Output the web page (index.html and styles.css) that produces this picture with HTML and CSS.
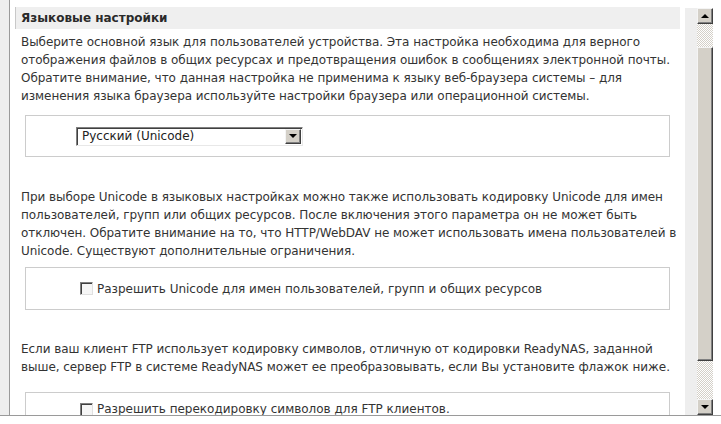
FILE: index.html
```html
<!DOCTYPE html>
<html lang="ru">
<head>
    <meta charset="UTF-8">
    <title>Языковые настройки</title>
    <link rel="stylesheet" href="styles.css">
</head>
<body>
    <div class="frame">
        <div class="side"></div>

        <div class="main">
            <div class="section-title">Языковые настройки</div>

            <p class="text first">Выберите основной язык для пользователей устройства. Эта настройка необходима для верного отображения файлов в общих ресурсах и предотвращения ошибок в сообщениях электронной почты. Обратите внимание, что данная настройка не применима к языку веб-браузера системы – для изменения языка браузера используйте настройки браузера или операционной системы.</p>

            <div class="option-box select-box">
                <div class="select">
                    <span class="select-value">Русский (Unicode)</span>
                    <span class="select-btn"><span class="arrow-down"></span></span>
                </div>
            </div>

            <p class="text second">При выборе Unicode в языковых настройках можно также использовать кодировку Unicode для имен пользователей, групп или общих ресурсов. После включения этого параметра он не может быть отключен. Обратите внимание на то, что HTTP/WebDAV не может использовать имена пользователей в Unicode. Существуют дополнительные ограничения.</p>

            <div class="option-box check-box">
                <label class="check"><span class="checkbox"></span>Разрешить Unicode для имен пользователей, групп и общих ресурсов</label>
            </div>

            <p class="text third">Если ваш клиент FTP использует кодировку символов, отличную от кодировки ReadyNAS, заданной выше, сервер FTP в системе ReadyNAS может ее преобразовывать, если Вы установите флажок ниже.</p>

            <div class="option-box check-box last">
                <label class="check"><span class="checkbox"></span>Разрешить перекодировку символов для FTP клиентов.</label>
            </div>
        </div>

        <div class="rail">
            <div class="rail-gap"></div>
            <div class="scrollbar">
                <div class="sb-btn"><span class="arrow-up"></span></div>
                <div class="sb-track top"></div>
                <div class="sb-thumb"></div>
                <div class="sb-track bottom"></div>
                <div class="sb-btn"><span class="arrow-down"></span></div>
            </div>
        </div>
    </div>
</body>
</html>
```

FILE: styles.css
```css
/* Basic styling */
body {
    margin: 0;
    padding: 0;
    background: #fff;
    font-family: "DejaVu Sans", Verdana, sans-serif;
    font-size: 12px;
    color: #333;
}

.frame {
    display: flex;
    height: 415px;
    border-bottom: 1px solid #9a9a9a;
    overflow: hidden;
}

.side {
    width: 9px;
    background: #eee;
    border-right: 1px solid #9a9a9a;
    flex-shrink: 0;
}

.main {
    width: 665px;
    padding: 7px 0 0 5px;
    flex-shrink: 0;
}

.section-title {
    height: 22px;
    line-height: 22px;
    background: #efefef;
    border-left: 1px solid #c8c8c8;
    padding-left: 5px;
    font-weight: bold;
    font-size: 12px;
    color: #2a2a2a;
}

.text {
    margin: 0;
    padding-left: 6px;
    line-height: 18px;
    letter-spacing: -0.05px;
}

.text.first { margin-top: 4px; }
.text.second { margin-top: 31px; }
.text.third { margin-top: 30px; }

.option-box {
    margin-left: 10px;
    width: 645px;
    box-sizing: border-box;
    border: 1px solid #ccc;
    display: flex;
    align-items: center;
}

.select-box {
    margin-top: 10px;
    height: 42px;
    padding-left: 50px;
}

.check-box {
    margin-top: 7px;
    height: 43px;
    padding-left: 54px;
}

.check-box.last {
    margin-top: 16px;
    align-items: flex-start;
    padding-top: 9px;
    height: 60px;
}

/* fake select */
.select {
    display: flex;
    align-items: center;
    width: 227px;
    height: 19px;
    box-sizing: border-box;
    border-top: 1px solid #808080;
    border-left: 1px solid #808080;
    border-right: 1px solid #e8e8e8;
    border-bottom: 1px solid #e8e8e8;
    box-shadow: inset 1px 1px 0 #404040;
    background: #fff;
    padding: 1px 1px 1px 5px;
}

.select-value {
    flex: 1;
    color: #222;
}

.select-btn,
.sb-btn {
    width: 16px;
    height: 15px;
    box-sizing: border-box;
    background: #d4d0c8;
    border-top: 1px solid #f4f4f4;
    border-left: 1px solid #f4f4f4;
    border-right: 1px solid #404040;
    border-bottom: 1px solid #404040;
    box-shadow: inset -1px -1px 0 #808080;
    display: flex;
    align-items: center;
    justify-content: center;
}

.arrow-down {
    width: 0;
    height: 0;
    border-left: 4px solid transparent;
    border-right: 4px solid transparent;
    border-top: 4px solid #000;
}

.arrow-up {
    width: 0;
    height: 0;
    border-left: 4px solid transparent;
    border-right: 4px solid transparent;
    border-bottom: 4px solid #000;
}

.check {
    display: flex;
    align-items: center;
    color: #333;
}

.checkbox {
    width: 13px;
    height: 13px;
    box-sizing: border-box;
    border-top: 1px solid #808080;
    border-left: 1px solid #808080;
    border-right: 1px solid #e0e0e0;
    border-bottom: 1px solid #e0e0e0;
    box-shadow: inset 1px 1px 0 #404040;
    background: #f6f6f6;
    margin-right: 4px;
}

/* right rail + scrollbar */
.rail {
    display: flex;
    margin-top: 8px;
    margin-left: 5px;
    height: 407px;
}

.rail-gap {
    width: 12px;
    background: #eee;
}

.scrollbar {
    width: 16px;
    display: flex;
    flex-direction: column;
}

.sb-btn {
    height: 16px;
}

.sb-track {
    background-color: #fff;
    background-image: repeating-conic-gradient(#d4d0c8 0 25%, #fff 0 50%);
    background-size: 2px 2px;
}

.sb-track.top { height: 23px; }
.sb-track.bottom { flex: 1; }

.sb-thumb {
    height: 314px;
    box-sizing: border-box;
    background: #d4d0c8;
    border-top: 1px solid #f4f4f4;
    border-left: 1px solid #f4f4f4;
    border-right: 1px solid #404040;
    border-bottom: 1px solid #404040;
    box-shadow: inset -1px -1px 0 #808080;
}
```
